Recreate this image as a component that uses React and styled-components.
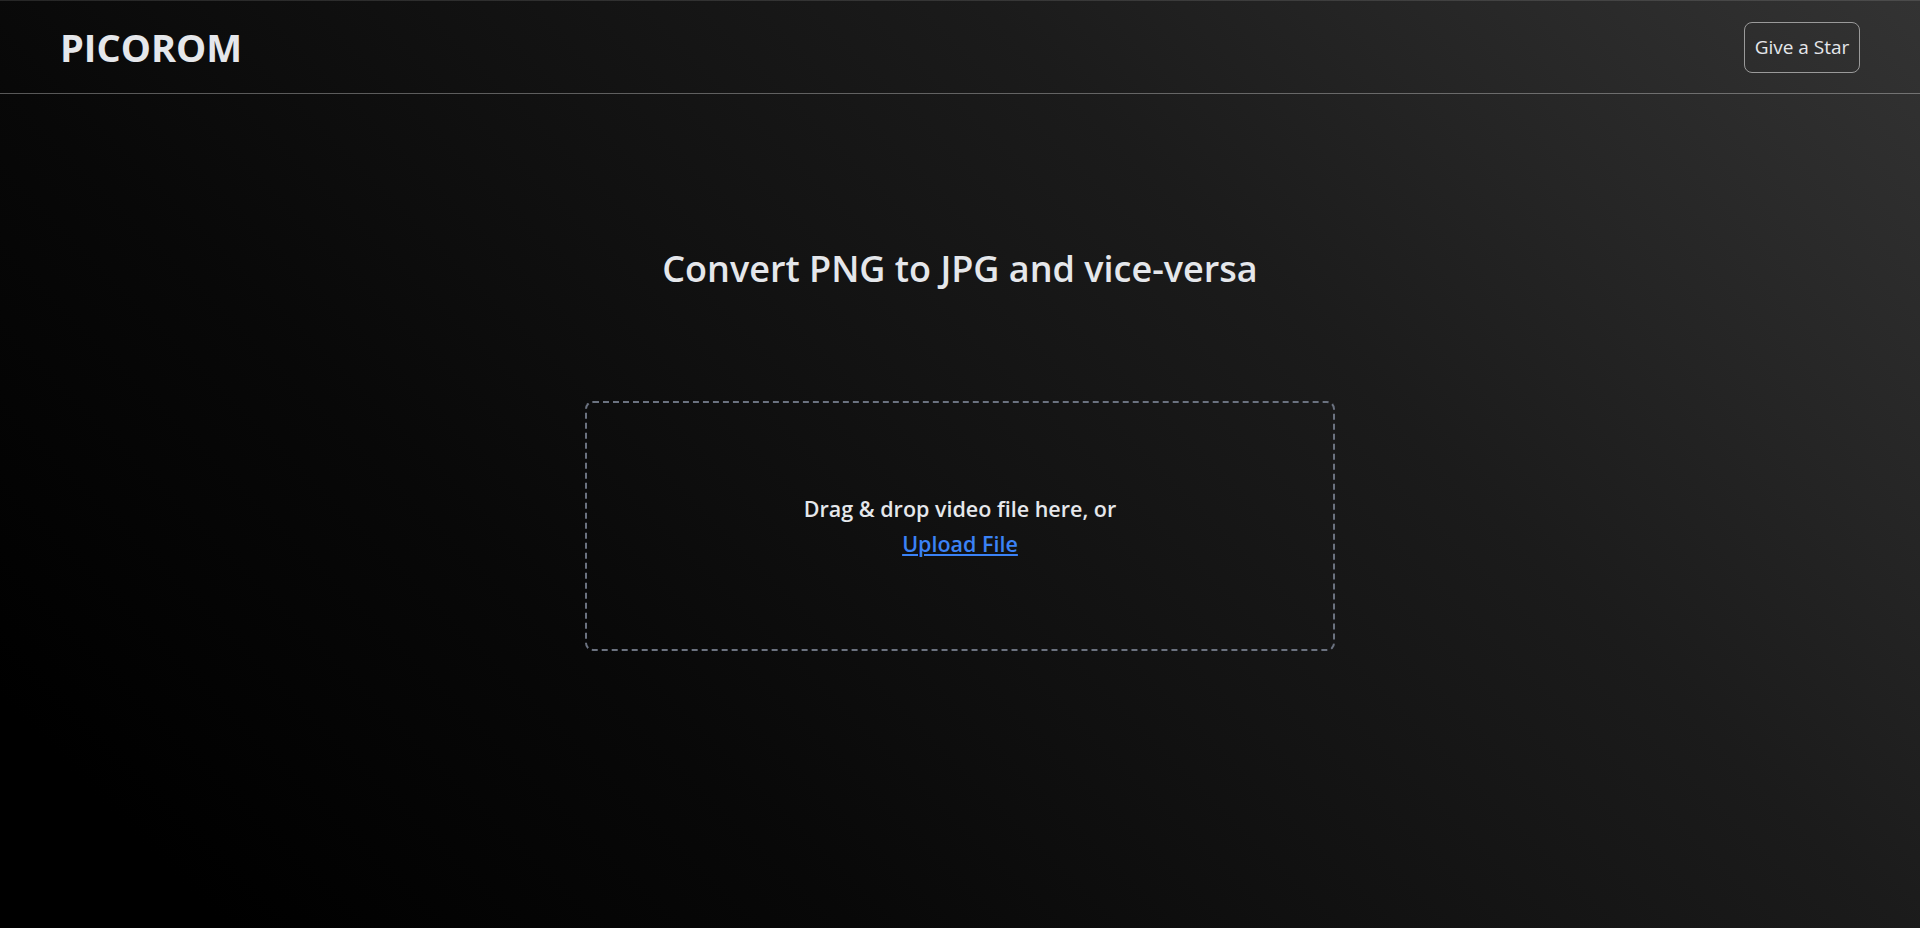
import React from 'react';
import styled, { createGlobalStyle } from 'styled-components';

const GlobalStyle = createGlobalStyle`
  html, body {
    margin: 0;
    padding: 0;
    height: 100%;
  }
  body {
    font-family: "Open Sans", "Noto Sans", sans-serif;
    background: linear-gradient(45deg, #000 8%, #080808 30%, #1b1b1b 67%, #333 100%);
    background-attachment: fixed;
    color: #e5e7eb;
  }
  #root {
    min-height: 100vh;
  }
`;

const Page = styled.div`
  min-height: 100vh;
  display: flex;
  flex-direction: column;
`;

const Header = styled.header`
  height: 94px;
  box-sizing: border-box;
  display: flex;
  align-items: center;
  justify-content: space-between;
  padding: 0 60px;
  border-top: 1px solid rgba(255, 255, 255, 0.12);
  border-bottom: 1px solid rgba(255, 255, 255, 0.32);
`;

const Logo = styled.div`
  font-size: 38px;
  font-weight: 700;
  color: #e5e7eb;
`;

const StarButton = styled.a`
  display: flex;
  align-items: center;
  justify-content: center;
  width: 116px;
  height: 51px;
  box-sizing: border-box;
  border: 1px solid #9a9a9a;
  border-radius: 8px;
  font-size: 19px;
  color: #e5e7eb;
  text-decoration: none;
  cursor: pointer;
`;

const Main = styled.main`
  display: flex;
  flex-direction: column;
  align-items: center;
  padding-top: 150px;
`;

const Title = styled.h1`
  margin: 0;
  font-size: 36px;
  font-weight: 600;
  color: #e5e7eb;
`;

const DropZone = styled.div`
  margin-top: 108px;
  width: 750px;
  height: 250px;
  box-sizing: border-box;
  border: 2px dashed #6b7280;
  border-radius: 8px;
  display: flex;
  flex-direction: column;
  align-items: center;
  justify-content: center;
  gap: 6px;
`;

const DropText = styled.p`
  margin: 0;
  font-size: 21.5px;
  font-weight: 600;
  color: #e5e7eb;
`;

const UploadLink = styled.span`
  font-size: 21.5px;
  font-weight: 600;
  color: #3b82f6;
  text-decoration: underline;
  cursor: pointer;
`;

const App = () => (
  <Page>
    <GlobalStyle />
    <Header>
      <Logo>PICOROM</Logo>
      <StarButton>Give a Star</StarButton>
    </Header>
    <Main>
      <Title>Convert PNG to JPG and vice-versa</Title>
      <DropZone>
        <DropText>Drag &amp; drop video file here, or</DropText>
        <UploadLink>Upload File</UploadLink>
      </DropZone>
    </Main>
  </Page>
);

export default App;
